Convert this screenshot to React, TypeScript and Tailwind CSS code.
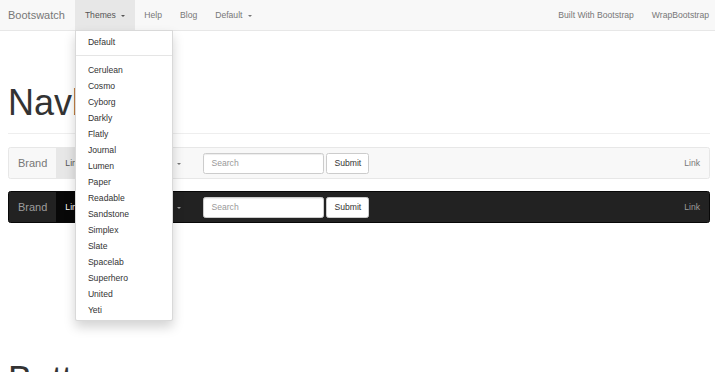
import React from 'react'

const themes = [
  'Cerulean', 'Cosmo', 'Cyborg', 'Darkly', 'Flatly', 'Journal', 'Lumen', 'Paper',
  'Readable', 'Sandstone', 'Simplex', 'Slate', 'Spacelab', 'Superhero', 'United', 'Yeti',
]

function Caret() {
  return (
    <span className="inline-block w-0 h-0 ml-[3px] border-x-[2.5px] border-t-[2.5px] border-x-transparent border-t-current align-middle" />
  )
}

function DemoNavbar({ dark }: { dark?: boolean }) {
  const link = dark ? 'text-[#9d9d9d]' : 'text-[#777]'
  return (
    <div
      className={
        dark
          ? 'h-[32px] flex items-center bg-[#222] border border-[#080808] rounded-[2.5px]'
          : 'h-[32px] flex items-center bg-[#f8f8f8] border border-[#e7e7e7] rounded-[2.5px]'
      }
    >
      <a className={`px-[9px] text-[11px] leading-[30px] ${link}`}>Brand</a>
      <a
        className={
          dark
            ? 'px-[9px] text-[8.6px] leading-[30px] bg-[#080808] text-white'
            : 'px-[9px] text-[8.6px] leading-[30px] bg-[#e7e7e7] text-[#555]'
        }
      >
        Link
      </a>
      <a className={`px-[9px] text-[8.6px] leading-[30px] ${link}`}>Link</a>
      <a className={`px-[9px] text-[8.6px] leading-[30px] ${link}`}>
        Dropdown <Caret />
      </a>
      <div className="flex items-center ml-[13px]">
        <input
          placeholder="Search"
          className="w-[121px] h-[21px] px-[7px] text-[8.6px] text-[#555] bg-white border border-[#ccc] rounded-[2.5px] shadow-[inset_0_1px_1px_rgba(0,0,0,0.075)] placeholder:text-[#999] outline-none"
        />
        <button className="ml-[2px] h-[21px] px-[7px] text-[8.6px] text-[#333] bg-white border border-[#ccc] rounded-[2.5px]">
          Submit
        </button>
      </div>
      <a className={`ml-auto pr-[9px] pl-[9px] text-[8.6px] leading-[30px] ${link}`}>Link</a>
    </div>
  )
}

export default function App() {
  return (
    <div className="relative w-[715px] h-[372px] overflow-hidden bg-white text-[#333] font-['Liberation_Sans',Arial,sans-serif]">
      {/* Top navbar */}
      <nav className="h-[31px] flex justify-between bg-[#f8f8f8] border-b border-[#e7e7e7] relative z-10">
        <div className="flex">
          <a className="pl-[8px] pr-[10px] text-[11px] leading-[30px] text-[#777]">Bootswatch</a>
          <div className="relative">
            <a className="block px-[10px] text-[8.6px] leading-[30px] bg-[#e7e7e7] text-[#555]">
              Themes <Caret />
            </a>
            <ul className="absolute top-[30px] left-0 w-[98px] pt-[3px] pb-[2px] bg-white border border-black/15 rounded-b-[2.5px] shadow-[0_6px_12px_rgba(0,0,0,0.175)]">
              <li className="px-[12px] py-[2px] text-[8.6px] leading-[12px] text-[#333]">Default</li>
              <li className="h-px mt-[5px] mb-[6px] bg-[#e5e5e5]" />
              {themes.map(t => (
                <li key={t} className="px-[12px] py-[2px] text-[8.6px] leading-[12px] text-[#333]">
                  {t}
                </li>
              ))}
            </ul>
          </div>
          <a className="px-[9px] text-[8.6px] leading-[30px] text-[#777]">Help</a>
          <a className="px-[9px] text-[8.6px] leading-[30px] text-[#777]">Blog</a>
          <a className="px-[9px] text-[8.6px] leading-[30px] text-[#777]">
            Default <Caret />
          </a>
        </div>
        <div className="flex">
          <a className="px-[9px] text-[8.6px] leading-[30px] text-[#777]">Built With Bootstrap</a>
          <a className="pl-[9px] pr-[6px] text-[8.6px] leading-[30px] text-[#777]">WrapBootstrap</a>
        </div>
      </nav>

      {/* Navbar section */}
      <div className="pl-[8px] pr-[5px]">
        <div className="mt-[52px] pb-[10px] border-b border-[#eee]">
          <h1 className="text-[36px] leading-[40px] font-normal">Navbar</h1>
        </div>
        <div className="mt-[13px]">
          <DemoNavbar />
        </div>
        <div className="mt-[12px]">
          <DemoNavbar dark />
        </div>

        {/* Buttons section */}
        <div className="mt-[137px] pb-[10px] border-b border-[#eee]">
          <h1 className="text-[36px] leading-[40px] font-normal">Buttons</h1>
        </div>
      </div>
    </div>
  )
}
